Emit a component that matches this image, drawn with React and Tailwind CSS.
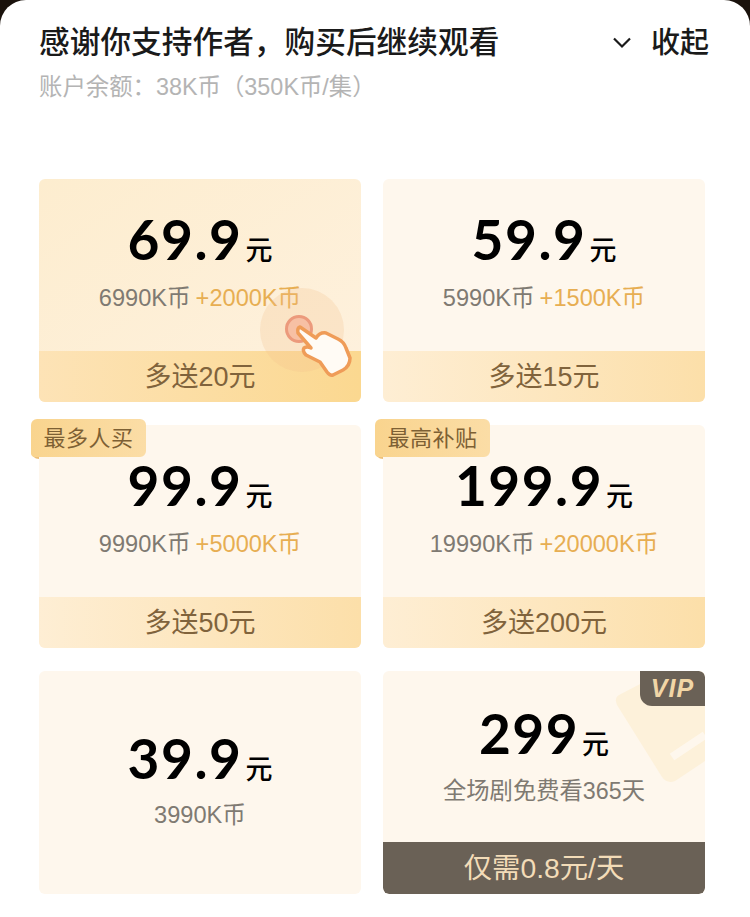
const SANS = 'font-["Liberation_Sans","Noto_Sans_CJK_SC",sans-serif]'

const Hand = () => (
  <svg width="84" height="84" viewBox="0 0 84 84" fill="none" className="absolute right-[17px] bottom-[30px] overflow-visible">
    <circle cx="42" cy="42" r="42" fill="#f3bf8c" fillOpacity="0.25" />
    <circle cx="39" cy="41" r="12.5" fill="#f7c0a4" stroke="#ec9a7c" strokeWidth="3" />
    <path
      d="M40 39L56 50Q60 44 66 45L78 51Q84 54 86 60L90 70Q90 78 83 82L73 87Q70 88 67 84L60 74L46 67Q42 63 44 60Q47 58 51 60L38 45Q37 40 40 39Z"
      fill="#fffbf5"
      stroke="#ef9c58"
      strokeWidth="3.5"
      strokeLinejoin="round"
    />
  </svg>
)

const Price = ({ value, top }) => (
  <div className={`flex items-baseline justify-center text-black ${top}`}>
    <span className="font-['Lato',sans-serif] text-[55px] font-bold leading-[76px] tracking-[1.5px]">{value}</span>
    <span className="ml-[3px] text-[27px] font-medium">元</span>
  </div>
)

const Plan = ({ price, base, bonus, footer, tag, selected, children }) => (
  <div className={`relative flex h-[223px] flex-col rounded-md ${selected ? 'bg-gradient-to-br from-[#fdedcf] to-[#fef1de]' : 'bg-[#fef7ed]'}`}>
    {tag && (
      <>
        <div className="absolute -left-2 top-[26px] h-[8px] w-2 rounded-bl-full bg-[#eec078]" />
        <div className="absolute -left-2 -top-[6px] flex h-[38px] w-[115px] items-center justify-center rounded-md rounded-bl-sm bg-gradient-to-r from-[#f9d48e] to-[#fbdda6] text-[22px] tracking-[0.5px] text-[#7d6034]">
          {tag}
        </div>
      </>
    )}
    <div className="flex flex-1 flex-col items-center">
      <Price value={price} top="mt-[22px]" />
      <div className="mt-[7px] text-[23.6px] leading-[28px] text-[#7f7a72]">
        {base}
        {bonus && <span className="ml-[5px] text-[#e7ae52]">{bonus}</span>}
      </div>
    </div>
    <div className={`flex h-[51px] items-center justify-center rounded-b-md bg-gradient-to-r pt-[2px] text-[27px] text-[#80633c] ${selected ? 'from-[#fde3b6] to-[#fbd890]' : 'from-[#feeed4] to-[#fcdfa9]'}`}>
      {footer}
    </div>
    {children}
  </div>
)

export default function App() {
  return (
    <div className={`h-[917px] w-[750px] overflow-hidden bg-[#1a120c] ${SANS}`}>
      <div className="h-full rounded-t-[26px] bg-white px-[39px]">
        <div className="flex items-center justify-between pt-[24px]">
          <h1 className="text-[30.7px] font-medium leading-[38px] text-[#1a1a1a]">感谢你支持作者，购买后继续观看</h1>
          <div className="mr-[2px] flex items-center text-[#1a1a1a]">
            <svg width="20" height="12" viewBox="0 0 20 12" fill="none" stroke="currentColor" strokeWidth="2.2">
              <path d="M2 1.5l8 8 8-8" />
            </svg>
            <span className="ml-[19px] text-[29px] font-medium leading-[38px]">收起</span>
          </div>
        </div>
        <p className="mt-[10px] text-[23.4px] leading-[30px] text-[#b4b4b4]">账户余额：38K币（350K币/集）</p>

        <div className="mt-[77px] grid w-[666px] grid-cols-[322px_322px] gap-x-[22px] gap-y-[23px]">
          <Plan selected price="69.9" base="6990K币" bonus="+2000K币" footer="多送20元">
            <Hand />
          </Plan>
          <Plan price="59.9" base="5990K币" bonus="+1500K币" footer="多送15元" />
          <Plan tag="最多人买" price="99.9" base="9990K币" bonus="+5000K币" footer="多送50元" />
          <Plan tag="最高补贴" price="199.9" base="19990K币" bonus="+20000K币" footer="多送200元" />
          <div className="relative flex h-[223px] flex-col items-center rounded-md bg-[#fef7ed]">
            <Price value="39.9" top="mt-[49px]" />
            <div className="mt-[5px] text-[23.6px] leading-[28px] text-[#7f7a72]">3990K币</div>
          </div>
          <div className="relative flex h-[223px] flex-col overflow-hidden rounded-md bg-[#fef7ed]">
            <svg width="100" height="120" viewBox="0 0 100 120" fill="none" className="absolute right-0 top-0">
              <path d="M14 24L60 0L100 0L100 90L70 110Q62 113 57 106L12 34Q9 27 14 24Z" fill="#fdf1da" />
              <path d="M67 86L100 64" stroke="#fef7ed" strokeWidth="8" />
            </svg>
            <div className="absolute right-0 top-0 flex h-[35px] w-[65px] items-center justify-center rounded-bl-xl rounded-tr-md bg-[#6a6156] text-[25px] font-bold italic tracking-[1px] text-[#f1d6a6]">
              VIP
            </div>
            <div className="relative flex flex-1 flex-col items-center">
              <Price value="299" top="mt-[24px]" />
              <div className="mt-[6px] text-[23.3px] leading-[28px] text-[#7f7a72]">全场剧免费看365天</div>
            </div>
            <div className="relative flex h-[52px] items-center justify-center rounded-b-md bg-[#6a6156] text-[28.3px] text-[#f3dcb8]">
              仅需0.8元/天
            </div>
          </div>
        </div>
      </div>
    </div>
  )
}
